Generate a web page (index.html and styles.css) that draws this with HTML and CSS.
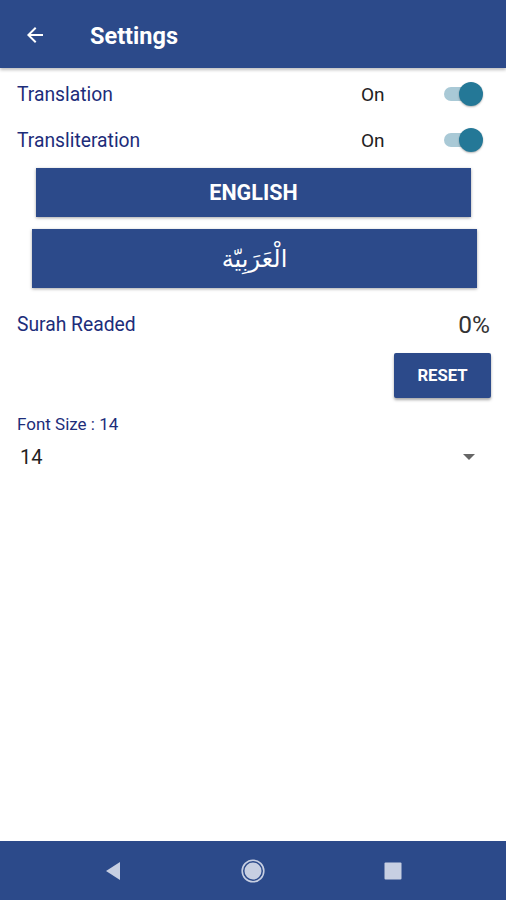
FILE: index.html
```html
<!DOCTYPE html>
<html lang="en">
<head>
  <meta charset="UTF-8" />
  <meta name="viewport" content="width=device-width, initial-scale=1.0" />
  <title>Settings</title>
  <link rel="stylesheet" href="styles.css">
</head>
<body>
  <div class="screen">
    <header class="appbar">
      <svg class="back" width="24" height="24" viewBox="0 0 24 24">
        <path d="M20 11H7.83l5.59-5.59L12 4l-8 8 8 8 1.41-1.41L7.83 13H20v-2z" fill="#fff"/>
      </svg>
      <h1>Settings</h1>
    </header>

    <main class="content">
      <div class="row">
        <span class="label">Translation</span>
        <span class="state">On</span>
        <span class="switch"><span class="thumb"></span></span>
      </div>
      <div class="row">
        <span class="label">Transliteration</span>
        <span class="state">On</span>
        <span class="switch"><span class="thumb"></span></span>
      </div>

      <button class="lang english">ENGLISH</button>
      <button class="lang arabic" lang="ar">الْعَرَبِيّة</button>

      <div class="progress">
        <span class="label">Surah Readed</span>
        <span class="percent">0%</span>
      </div>
      <div class="reset-wrap">
        <button class="reset">RESET</button>
      </div>

      <div class="font-label">Font Size : 14</div>
      <div class="select">
        <span>14</span>
        <span class="caret"></span>
      </div>
    </main>

    <nav class="navbar">
      <span class="nav-item">
        <svg width="20" height="20" viewBox="0 0 20 20"><path d="M17 1v18L3 10z" fill="#c7cfe2"/></svg>
      </span>
      <span class="nav-item">
        <svg width="26" height="26" viewBox="0 0 26 26"><circle cx="13" cy="13" r="8.5" fill="#c7cfe2"/><circle cx="13" cy="13" r="10.8" fill="none" stroke="#c7cfe2" stroke-width="1.6"/></svg>
      </span>
      <span class="nav-item">
        <svg width="20" height="20" viewBox="0 0 20 20"><rect x="1.5" y="1.5" width="17" height="17" rx="1" fill="#c7cfe2"/></svg>
      </span>
    </nav>
  </div>
</body>
</html>
```

FILE: styles.css
```css
body {
  margin: 0;
  font-family: Roboto, 'Noto Sans', sans-serif;
  background: #fff;
}
.screen {
  width: 506px;
  height: 900px;
  display: flex;
  flex-direction: column;
}
.appbar {
  height: 68px;
  background: #2c4a8a;
  display: flex;
  align-items: center;
  padding-left: 23px;
  box-shadow: 0 2px 3px rgba(0, 0, 0, 0.25);
  flex-shrink: 0;
}
.appbar .back {
  margin-top: 2px;
}
.appbar h1 {
  margin: 4px 0 0 43px;
  color: #fff;
  font-size: 23.5px;
  font-weight: 700;
}
.content {
  flex: 1;
  padding: 0 0 0 17px;
}
.row {
  height: 46px;
  display: flex;
  align-items: center;
  padding-right: 26px;
}
.row:first-child {
  margin-top: 3px;
}
.label {
  color: #1d2d7a;
  font-size: 19.3px;
  flex: 1;
}
.state {
  color: #222;
  font-size: 19px;
  width: 83px;
}
.switch {
  width: 34px;
  height: 14px;
  border-radius: 7px;
  background: #a9c9d6;
  position: relative;
  margin-right: 2px;
}
.thumb {
  position: absolute;
  right: -5px;
  top: -5px;
  width: 24px;
  height: 24px;
  border-radius: 50%;
  background: #247897;
  box-shadow: 0 1px 2px rgba(0, 0, 0, 0.3);
}
.lang {
  display: flex;
  align-items: center;
  justify-content: center;
  border: none;
  background: #2c4a8a;
  color: #fff;
  font-family: Roboto, 'Noto Sans', sans-serif;
  box-shadow: 0 1px 3px rgba(0, 0, 0, 0.35);
}
.english {
  width: 435px;
  height: 49px;
  margin: 5px 0 0 19px;
  font-size: 21.5px;
  font-weight: bold;
}
.arabic {
  width: 445px;
  height: 59px;
  margin: 12px 0 0 15px;
  font-size: 24px;
  font-family: 'DejaVu Sans', 'Noto Sans', sans-serif;
}
.progress {
  display: flex;
  align-items: center;
  height: 30px;
  margin-top: 21px;
  padding-right: 16px;
}
.percent {
  color: #333;
  font-size: 24.5px;
}
.reset-wrap {
  display: flex;
  justify-content: flex-end;
  padding-right: 15px;
  margin-top: 14px;
}
.reset {
  width: 97px;
  height: 45px;
  border: none;
  border-radius: 2px;
  background: #2c4a8a;
  color: #fff;
  font-family: Roboto, 'Noto Sans', sans-serif;
  font-size: 16.7px;
  font-weight: bold;
  box-shadow: 0 2px 3px rgba(0, 0, 0, 0.35);
}
.font-label {
  color: #1d2d7a;
  font-size: 17px;
  line-height: 20px;
  margin-top: 16px;
}
.select {
  display: flex;
  align-items: center;
  justify-content: space-between;
  height: 24px;
  margin-top: 11px;
  padding: 0 31px 0 3px;
  color: #222;
  font-size: 20px;
}
.caret {
  width: 0;
  height: 0;
  border-left: 6px solid transparent;
  border-right: 6px solid transparent;
  border-top: 6px solid #666;
}
.navbar {
  height: 59px;
  background: #2c4a8a;
  display: flex;
  align-items: center;
  padding: 0 43px;
  flex-shrink: 0;
}
.nav-item {
  flex: 1;
  display: flex;
  justify-content: center;
}
```
